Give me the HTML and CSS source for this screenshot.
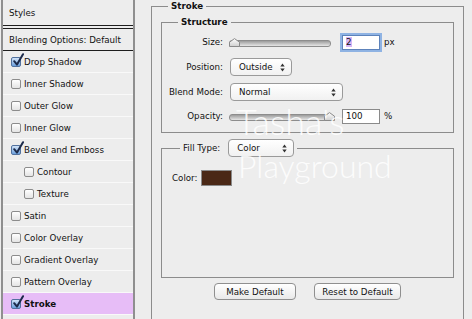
FILE: index.html
```html
<!DOCTYPE html>
<html lang="en">
<head>
    <meta charset="UTF-8">
    <title>Layer Style - Stroke</title>
    <link rel="stylesheet" href="styles.css">
</head>
<body>
    <svg class="defs" width="0" height="0">
        <defs>
            <linearGradient id="thumbFill" x1="0" y1="0" x2="0" y2="1">
                <stop offset="0" stop-color="#ffffff"/>
                <stop offset="1" stop-color="#cfcfcf"/>
            </linearGradient>
            <symbol id="tick" viewBox="0 0 12 14">
                <path d="M2.2 8.2 L5 11.6 L11 1.2" fill="none" stroke="#1c2a4a" stroke-width="2" stroke-linecap="round" stroke-linejoin="round"/>
            </symbol>
            <symbol id="thumb" viewBox="0 0 11 9">
                <path d="M0.5 8.5 V4.2 L5.5 0.6 L10.5 4.2 V8.5 Z" fill="url(#thumbFill)" stroke="#8a8a8a"/>
            </symbol>
            <symbol id="arrows" viewBox="0 0 5 9">
                <path d="M2.5 0.5 L4.7 3.5 H0.3 Z M2.5 8.5 L4.7 5.5 H0.3 Z" fill="#333"/>
            </symbol>
        </defs>
    </svg>

    <div class="window">
        <div class="styles-panel">
            <div class="panel-head">Styles</div>
            <div class="panel-blend">Blending Options: Default</div>
            <ul class="effects">
                <li class="effect"><span class="check on"><svg><use href="#tick"/></svg></span>Drop Shadow</li>
                <li class="effect"><span class="check"></span>Inner Shadow</li>
                <li class="effect"><span class="check"></span>Outer Glow</li>
                <li class="effect"><span class="check"></span>Inner Glow</li>
                <li class="effect"><span class="check on"><svg><use href="#tick"/></svg></span>Bevel and Emboss</li>
                <li class="effect sub"><span class="check"></span>Contour</li>
                <li class="effect sub"><span class="check"></span>Texture</li>
                <li class="effect"><span class="check"></span>Satin</li>
                <li class="effect"><span class="check"></span>Color Overlay</li>
                <li class="effect"><span class="check"></span>Gradient Overlay</li>
                <li class="effect"><span class="check"></span>Pattern Overlay</li>
                <li class="effect active"><span class="check on"><svg><use href="#tick"/></svg></span>Stroke</li>
            </ul>
        </div>

        <div class="options">
            <fieldset class="group stroke">
                <legend>Stroke</legend>

                <fieldset class="group structure">
                    <legend>Structure</legend>
                    <div class="row">
                        <label>Size:</label>
                        <div class="slider"><svg class="thumb at-start"><use href="#thumb"/></svg></div>
                        <span class="num focused"><span class="sel">2</span></span>
                        <span class="unit">px</span>
                    </div>
                    <div class="row tall">
                        <label>Position:</label>
                        <span class="popup pos">Outside<svg class="arr"><use href="#arrows"/></svg></span>
                    </div>
                    <div class="row">
                        <label>Blend Mode:</label>
                        <span class="popup blend">Normal<svg class="arr"><use href="#arrows"/></svg></span>
                    </div>
                    <div class="row">
                        <label>Opacity:</label>
                        <div class="slider"><svg class="thumb at-end"><use href="#thumb"/></svg></div>
                        <span class="num">100</span>
                        <span class="unit">%</span>
                    </div>
                </fieldset>

                <fieldset class="group fill">
                    <legend><label>Fill Type:</label><span class="popup type">Color<svg class="arr"><use href="#arrows"/></svg></span></legend>
                    <div class="fill-body">
                        <label>Color:</label>
                        <span class="swatch"></span>
                    </div>
                </fieldset>

                <div class="buttons">
                    <button class="btn make">Make Default</button>
                    <button class="btn reset">Reset to Default</button>
                </div>
            </fieldset>
        </div>

        <div class="watermark">
            <span class="wm-name">Tasha's</span>
            <span class="wm-place">Playground</span>
        </div>
    </div>
</body>
</html>
```

FILE: styles.css
```css
* {
    box-sizing: border-box;
}
body {
    margin: 0;
    background-color: #ededed;
    font-family: "DejaVu Sans", sans-serif;
    font-size: 8.7px;
    color: #111;
}
.defs {
    position: absolute;
}
.window {
    display: flex;
    height: 319px;
    position: relative;
    overflow: hidden;
}

/* left list */
.styles-panel {
    flex: none;
    width: 134px;
    margin-left: 1px;
    border-left: 2px solid #8f8f8f;
    border-right: 2px solid #8f8f8f;
}
.panel-head {
    height: 26px;
    padding-left: 6px;
    display: flex;
    align-items: center;
    border-bottom: 1px solid #1e1e1e;
}
.panel-blend {
    height: 23px;
    margin-top: 2px;
    padding-left: 6px;
    display: flex;
    align-items: center;
    border-top: 1px solid #1e1e1e;
    border-bottom: 1px solid #1e1e1e;
}
.effects {
    list-style: none;
    margin: 0;
    padding: 0;
}
.effect {
    height: 22px;
    padding-left: 8px;
    display: flex;
    align-items: center;
    gap: 3px;
    border-bottom: 1px solid #f9f9f9;
}
.effect.sub {
    padding-left: 21px;
}
.effect.active {
    background-color: #e7bdf7;
    font-weight: bold;
}
.check {
    position: relative;
    width: 10px;
    height: 10px;
    border: 1px solid #8c8c8c;
    border-radius: 2px;
    background: linear-gradient(#ffffff, #e4e4e4);
}
.check.on {
    border-color: #51719e;
    background: linear-gradient(#d2e4f8, #6b9fdc);
}
.check svg {
    position: absolute;
    left: 0;
    top: -5px;
    width: 12px;
    height: 14px;
}

/* right side */
.options {
    flex: 1;
    padding: 0 8px 0 16px;
}
.group {
    margin: 0;
    padding: 0;
    min-width: 0;
    border: 1px solid #8c8c8c;
}
.group > legend {
    font-weight: bold;
    line-height: 12px;
    padding: 0 3px;
}
.stroke {
    height: 340px;
    padding: 0 9px;
}
.stroke > legend {
    margin-left: 7px;
}
.structure {
    margin-top: 4px;
    padding: 5px 0 7px;
}
.structure > legend {
    margin-left: 16px;
}
.row {
    height: 18px;
    display: flex;
    align-items: center;
    margin-bottom: 6px;
}
.row:last-child {
    margin-bottom: 0;
}
.row.tall {
    height: 20px;
}
.row label {
    width: 61px;
    text-align: right;
    margin-right: 7px;
}
.slider {
    position: relative;
    width: 102px;
    height: 14px;
    margin-left: -1px;
}
.slider::before {
    content: "";
    position: absolute;
    left: 0;
    right: 0;
    top: 5px;
    height: 5px;
    border: 1px solid #8d8d8d;
    border-radius: 3px;
    background: linear-gradient(#9c9c9c, #e6e6e6);
}
.thumb {
    position: absolute;
    top: 3px;
    width: 11px;
    height: 9px;
}
.thumb.at-start {
    left: 0;
}
.thumb.at-end {
    right: -4px;
}
.num {
    width: 38px;
    height: 15px;
    margin-left: 11px;
    padding-left: 3px;
    display: flex;
    align-items: center;
    background-color: #fff;
    border: 1px solid #8a8a8a;
}
.num.focused {
    border-color: #5d83bb;
    box-shadow: 0 0 0 2px #8fb3e3;
}
.sel {
    background-color: #d7b6f6;
}
.unit {
    margin-left: 4px;
}
.popup {
    height: 18px;
    padding: 0 6px 0 8px;
    display: flex;
    align-items: center;
    justify-content: space-between;
    font-weight: normal;
    background: linear-gradient(#ffffff, #f1f1f1);
    border: 1px solid #9a9a9a;
    border-radius: 4px;
}
.popup.pos {
    width: 62px;
}
.popup.blend {
    width: 113px;
}
.popup.type {
    width: 66px;
    margin-left: 8px;
}
.arr {
    width: 5px;
    height: 9px;
}
.fill {
    margin-top: 6px;
    padding: 13px 0 91px 10px;
}
.fill > legend {
    display: flex;
    align-items: center;
    height: 18px;
    margin-left: 8px;
    font-weight: normal;
}
.fill-body {
    display: flex;
    align-items: center;
    height: 16px;
    gap: 4px;
}
.swatch {
    width: 31px;
    height: 16px;
    background-color: #4a2816;
    border: 1px solid #8a8a8a;
}
.buttons {
    display: flex;
    justify-content: center;
    gap: 18px;
    margin-top: 5px;
}
.btn {
    height: 17px;
    padding: 0;
    font-family: inherit;
    font-size: 8.7px;
    color: #111;
    background: linear-gradient(#ffffff, #e9e9e9);
    border: 1px solid #8f8f8f;
    border-radius: 4px;
}
.btn.make {
    width: 82px;
}
.btn.reset {
    width: 87px;
}

/* watermark over the dialog */
.watermark {
    position: absolute;
    left: 236px;
    top: 101px;
    font-family: "Lato", sans-serif;
    font-weight: 300;
    color: rgba(255, 255, 255, 0.85);
    pointer-events: none;
}
.wm-name {
    display: block;
    font-size: 36px;
    line-height: 40px;
}
.wm-place {
    display: block;
    margin: 3px 0 0 2px;
    font-size: 32px;
    line-height: 44px;
}
```
